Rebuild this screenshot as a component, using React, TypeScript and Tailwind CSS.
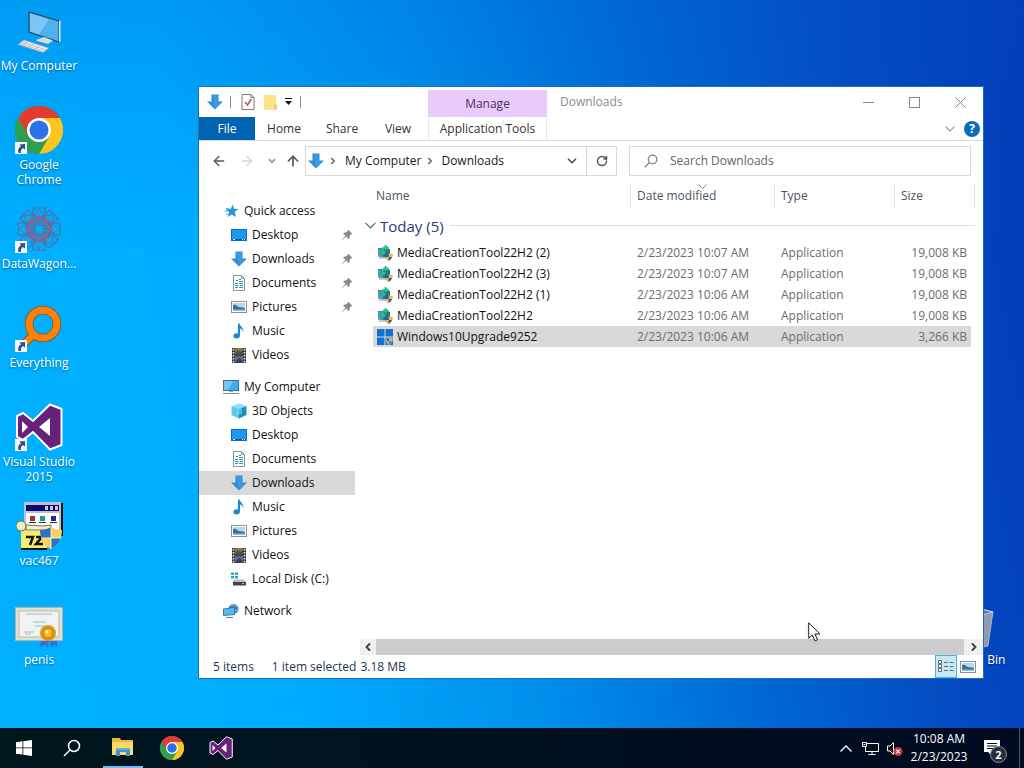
import React, { useState } from 'react';
import { ArrowLeft, ArrowRight, ArrowUp, ChevronDown, ChevronLeft, ChevronRight, RotateCw } from 'lucide-react';

interface IconProps {
  className?: string;
}

/* ---------- icons ---------- */

function DownArrowIcon({ className = 'w-4 h-4' }: IconProps) {
  return (
    <svg viewBox="0 0 16 16" className={className} aria-hidden="true">
      <path d="M4.500.5h7v7H16L8 15.500 0 7.500h4.500z" fill="#2f8bd8" />
      <path d="M5.500 1h5v7.500H14L8 14.500z" fill="#45a0e6" opacity=".7" />
    </svg>
  );
}

function StarIcon() {
  return (
    <svg viewBox="0 0 16 16" className="w-4 h-4" aria-hidden="true">
      <path d="M10 1.500l1 4.200 4.500.3-3.700 2.800L13 14l-4.300-2.600L4.500 14l1.700-4.700L3 6.200l4.500-.3z" fill="#2b95dc" />
      <path d="M3 5.500h3M1.500 8h4M3 11h2.500" stroke="#4eb3ee" />
    </svg>
  );
}

function DesktopIcon() {
  return (
    <svg viewBox="0 0 16 16" className="w-4 h-4" aria-hidden="true">
      <rect x=".5" y="2.500" width="15" height="11" fill="#1b98f5" stroke="#0f6cb8" />
      <path d="M1 12.500h14" stroke="#0c5a9c" />
      <path d="M2 12.500h2M11 12.500h1M13 12.500h1" stroke="#d9efff" />
    </svg>
  );
}

function DocumentIcon() {
  return (
    <svg viewBox="0 0 16 16" className="w-4 h-4" aria-hidden="true">
      <path d="M2.500.5h8l3 3v12h-11z" fill="#fdfefe" stroke="#8794a0" />
      <path d="M10.500.5v3h3" fill="none" stroke="#8794a0" />
      <path d="M5 5.500h2M8 4.500h2M8 6.500h4M4 8.500h3M8 8.500h4M4 10.500h4M9 10.500h3M4 12.500h3M8 12.500h4" stroke="#3c8fb8" />
    </svg>
  );
}

function PictureIcon() {
  return (
    <svg viewBox="0 0 16 16" className="w-4 h-4" aria-hidden="true">
      <rect x=".5" y="2.500" width="15" height="11" fill="#fff" stroke="#8c9299" />
      <rect x="2" y="4" width="12" height="8" fill="#b5d9ee" />
      <path d="M2 6c3-1 4 1.500 6 2s4 .5 6 1v3H2z" fill="#3c6f93" />
      <path d="M2 10.500h12V12H2z" fill="#8dbfd8" />
    </svg>
  );
}

function MusicIcon() {
  return (
    <svg viewBox="0 0 16 16" className="w-4 h-4" aria-hidden="true">
      <path d="M7 .5h1.600c.4 3 4.600 4 3.600 9-.3-2.500-1.500-3.500-3.200-4v7c0 2-1.600 3-3.500 3S2.300 14.400 2.300 13s1.500-2.800 3.400-2.800c.5 0 .9.1 1.300.2z" fill="#1c8bd4" />
    </svg>
  );
}

function VideoIcon() {
  return (
    <svg viewBox="0 0 16 16" className="w-4 h-4" aria-hidden="true">
      <rect x="1" y="1" width="14" height="15" fill="#3b3b3b" />
      <rect x="4" y="1" width="8" height="7" fill="#7d7b4e" />
      <rect x="4" y="9" width="8" height="6" fill="#5c6a9c" />
      <path d="M4 6l3-3 2 2 3-2v5H4z" fill="#4b5236" />
      <path d="M5 14l3-3 3 2v2H5z" fill="#303f68" />
      <path d="M2.500 2v14M13.500 2v14" stroke="#f1f1f1" strokeWidth="1.500" strokeDasharray="1.500 1.500" />
    </svg>
  );
}

function ComputerIcon() {
  return (
    <svg viewBox="0 0 16 16" className="w-4 h-4" aria-hidden="true">
      <rect x=".5" y="1.500" width="15" height="10" fill="#3facf0" stroke="#3c7294" />
      <path d="M1 2h9L5 11H1z" fill="#74c6f8" />
      <path d="M0 14.500h16" stroke="#7c868d" />
      <path d="M6 12.500h4" stroke="#a5adb3" />
    </svg>
  );
}

function CubeIcon() {
  return (
    <svg viewBox="0 0 16 16" className="w-4 h-4" aria-hidden="true">
      <path d="M8 .5l7.500 2.500L8 6 .5 3z" fill="#8fe0f2" />
      <path d="M.5 3L8 6v9.500L.5 12z" fill="#5cc9ea" />
      <path d="M15.500 3L8 6v9.500l7.500-3.500z" fill="#1a8fbf" />
      <path d="M5 6l6-2v7l-6 2z" fill="#6fd3ec" opacity=".6" />
    </svg>
  );
}

function DiskIcon() {
  return (
    <svg viewBox="0 0 16 16" className="w-4 h-4" aria-hidden="true">
      <path d="M0 1.500h3v2.500H0zM4 1.500h3v2.500H4zM0 5h3v2.500H0zM4 5h3v2.500H4z" fill="#1fb1c4" />
      <path d="M3 8.500h10l2 2.500H2z" fill="#b8bfc3" />
      <rect x="2" y="11" width="13" height="3.500" fill="#3d444a" />
      <rect x="11" y="12" width="2" height="1" fill="#6fe08a" />
    </svg>
  );
}

function NetworkIcon() {
  return (
    <svg viewBox="0 0 16 16" className="w-4 h-4" aria-hidden="true">
      <circle cx="10.500" cy="6" r="5" fill="#3e87b8" />
      <path d="M8 3c2-2 5-1 6 1M7 7c2 2 5 2 8-1" stroke="#8ac6e8" fill="none" />
      <path d="M.5 6l11-1.500v7L.5 12.500z" fill="#58b9ef" stroke="#2c7daf" />
      <path d="M3 14.500h7" stroke="#5d7e92" />
    </svg>
  );
}

function PinIcon() {
  return (
    <svg viewBox="0 0 12 12" className="w-3 h-3" aria-hidden="true">
      <path d="M7 .5l4.500 4.500-1.200.2-1.800 1.800c.3 1.300 0 2.300-.8 3L5.200 7.500 1 11.300.7 11 4.500 6.800 2 4.300c.8-.8 1.800-1 3-.8l1.800-1.800z" fill="#848a8f" />
    </svg>
  );
}

function MediaToolIcon() {
  return (
    <svg viewBox="0 0 16 16" className="w-4 h-4" aria-hidden="true">
      <path d="M1 3l12 1v8.500L1 11.500z" fill="#2f6f94" />
      <path d="M1 4l5 .5V11H1z" fill="#5596b8" />
      <path d="M2 13h7" stroke="#7c95a1" />
      <path d="M4 7C4 3.500 5.500 2 8 2V0l4 3-4 3V4.200C6.800 4.200 6.500 5 6.800 6l2.700-.5L7 10z" fill="#1ecf8a" stroke="#128a66" strokeWidth=".5" />
      <path d="M8 9.500l3.700-1.200 3.700 1.200c0 3-1 5-3.700 6.500C9 14.500 8 12.500 8 9.500z" fill="#2f5f90" />
      <path d="M11.700 8.300l3.700 1.200-.3 2.500h-3.400zM11.700 12v4c-1.800-1-2.900-2.300-3.400-4z" fill="#e9c044" />
    </svg>
  );
}

function UpgradeIcon() {
  return (
    <svg viewBox="0 0 16 16" className="w-4 h-4" aria-hidden="true">
      <path d="M0 0h7.500v7.500H0zM8.500 0H16v7.500H8.500zM0 8.500h7.500V16H0zM8.500 8.500H16V16H8.500z" fill="#0d74cf" />
      <path d="M9 9.500l3.200-1 3.200 1c0 3-.8 4.800-3.200 6.300C9.800 14.300 9 12.500 9 9.500z" fill="#2f6fb0" stroke="#dcdcdc" strokeWidth=".6" />
      <path d="M12.200 8.800l2.900.9-.2 2.500h-2.700zM12.200 12.200v3.200c-1.500-1-2.200-1.900-2.700-3.200z" fill="#e9c044" />
    </svg>
  );
}

function MagnifierIcon({ className = 'w-3 h-3' }: IconProps) {
  return (
    <svg viewBox="0 0 18 18" className={className} fill="none" stroke="currentColor" strokeWidth="1.500" aria-hidden="true">
      <circle cx="11" cy="7" r="5.500" />
      <path d="M7 11l-6 6" />
    </svg>
  );
}

function ChromeIcon({ className = 'w-12 h-12' }: IconProps) {
  return (
    <svg viewBox="0 0 48 48" className={className} aria-hidden="true">
      <circle cx="24" cy="24" r="24" fill="#2f9e4f" />
      <path d="M3.200 12A24 24 0 0 1 44.800 12H24L13.600 30z" fill="#e33b2e" />
      <path d="M44.800 12A24 24 0 0 1 24 48L34.400 30 24 12z" fill="#fcc522" />
      <path d="M3.200 12A24 24 0 0 0 24 48L34.400 30H13.600z" fill="#2f9e4f" />
      <circle cx="24" cy="24" r="12" fill="#fff" />
      <circle cx="24" cy="24" r="9.500" fill="#2d71e8" />
    </svg>
  );
}

function VisualStudioIcon({ className = 'w-12 h-12' }: IconProps) {
  return (
    <svg viewBox="0 0 48 48" className={className} aria-hidden="true">
      <path
        d="M35 1.500l11.500 4.500v36L35 46.500 18 29 8 37l-6-3V13l6-3 10 8z"
        fill="#68217a"
        stroke="#fff"
        strokeWidth="2"
      />
      <path d="M35 15L24 24l11 9zM7 18v12l6-6z" fill="#fff" />
    </svg>
  );
}

function MyComputerIcon() {
  return (
    <svg viewBox="0 0 48 48" className="w-12 h-12" aria-hidden="true">
      <g transform="translate(0 2)">
        <path d="M14 3l30 9v21l-30-10z" fill="#4eb0ec" stroke="#26485e" strokeWidth="1.200" />
        <path d="M15 4.500l19 6-10 15-9-3z" fill="#7cc5f4" />
        <path d="M44 12l1.500-.5v21L44 33z" fill="#dfe6ea" />
        <path d="M21 31l8-3 9 3.500-5 3.500-11-3z" fill="#d5dde2" />
        <path d="M9 31l25 8-6 4.500L3 35.500z" fill="#eceff1" stroke="#97a2aa" strokeWidth=".8" />
        <path d="M7 33l24 8M5 34.500l24 8M13 32.500l-6 4M19 34.500l-6 4M25 36.500l-6 4" stroke="#a9b3ba" strokeWidth=".7" />
      </g>
    </svg>
  );
}

// eight overlapping rings of squares around an open centre
function DataWagonIcon() {
  return (
    <svg viewBox="0 0 48 48" className="w-12 h-12" fill="none" aria-hidden="true">
      {[0, 45, 90, 135, 180, 225, 270, 315].map((angle) => (
        <g key={angle} transform={`rotate(${angle} 24 24)`}>
          <path d="M18 3h12v9l-6 8-6-8z" stroke="#4a74a8" strokeWidth="1.200" />
          <path d="M20 9l4-5 4 5-4 9z" stroke="#5f6f9c" />
          <path d="M19 14l5-3 5 3" stroke="#8f5c8c" strokeWidth="1.500" />
          <circle cx="24" cy="14" r="1.600" fill="#c8486c" />
        </g>
      ))}
      <circle cx="24" cy="24" r="6" stroke="#5c78a0" />
    </svg>
  );
}

function EverythingIcon() {
  return (
    <svg viewBox="0 0 48 48" className="w-12 h-12" fill="none" aria-hidden="true">
      <g transform="translate(0 1)">
        <path d="M20 28L6 42" stroke="#7a5433" strokeWidth="8.500" />
        <circle cx="28" cy="19" r="14" stroke="#7a5433" strokeWidth="8.500" />
        <path d="M20 28L6 42" stroke="#ff8208" strokeWidth="6.500" />
        <circle cx="28" cy="19" r="14" stroke="#ff8208" strokeWidth="7" />
      </g>
    </svg>
  );
}

function SetupIcon() {
  return (
    <svg viewBox="0 0 48 48" className="w-12 h-12" aria-hidden="true">
      <path d="M10 1h38v33H12z" fill="#111" />
      <rect x="9" y="0" width="37" height="31" fill="#c3bfcb" />
      <rect x="11" y="3" width="33" height="6" fill="#0a0a78" />
      <path d="M30 4h3v4h-3zM35 4h3v4h-3zM40 4h3v4h-3z" fill="#c8c8c8" />
      <rect x="11" y="11" width="33" height="18" fill="#fff" />
      <rect x="15" y="14" width="5" height="5" fill="#a73324" />
      <rect x="25" y="14" width="5" height="5" fill="#1f9797" />
      <rect x="36" y="14" width="5" height="5" fill="#1b2a9c" />
      <path d="M14 20.500h7M24 20.500h7M35 20.500h7" stroke="#333" />
      <path d="M6 29h26v18H6z" fill="#f4ec6b" />
      <path d="M6 47h26" stroke="#111" strokeWidth="2" />
      <path d="M11 23l17 1 8-1v5H11z" fill="#f1efcd" stroke="#77733a" />
      <circle cx="6" cy="24" r="5" fill="#ecebc9" stroke="#77733a" />
      <path d="M11 35h7l-3 8M21 35h6l-6 7h7" fill="none" stroke="#111" strokeWidth="2.500" />
      <path d="M25 28c4 0 8-1 11-3 3 2 7 3 11 3 0 9-4 15-11 19-7-4-11-10-11-19z" fill="#fbd15b" />
      <path d="M36 25c-3 2-7 3-11 3 0 3 .5 5 1.500 8H36zM36 36v11c5-3 8-6 9.500-11z" fill="#2f74b8" />
      <path d="M36 25v22M26 36h20" stroke="#fff" strokeWidth=".8" />
    </svg>
  );
}

function CertificateIcon() {
  return (
    <svg viewBox="0 0 48 48" className="w-12 h-12" aria-hidden="true">
      <g transform="translate(0 3)">
        <path d="M26 31l-1 12 5-2 3 3 1-12zM34 31l2 13 3-3 4 2-3-12z" fill="#3271d6" />
        <rect x=".5" y="3.500" width="47" height="33" fill="#dfdfd3" stroke="#b4b5a9" />
        <rect x="4" y="7" width="40" height="26" fill="#eef4f6" stroke="#c6b995" />
        <path d="M11 10h26M18 18h13M20 22h9M9 28h10M10 30h6" stroke="#adb8bd" />
        <circle cx="33" cy="29" r="8" fill="#e39a16" />
        <circle cx="33" cy="29" r="5" fill="#f5b92e" stroke="#b87509" />
        <circle cx="32" cy="28" r="1.500" fill="#fff0b8" />
      </g>
    </svg>
  );
}

function RecycleBinIcon() {
  return (
    <svg viewBox="0 0 48 48" className="w-12 h-12" aria-hidden="true">
      <path d="M2 10l22-4 19 5-5 34-14 3-17-4z" fill="#8fa3b8" />
      <path d="M2 10l22-4 19 5-19 6z" fill="#5a7cae" stroke="#dfe7ee" />
      <path d="M24 17l19-6-5 34-14 3z" fill="#8d9dae" stroke="#c7d2dc" strokeWidth=".6" />
    </svg>
  );
}

function ShortcutArrow() {
  return (
    <svg viewBox="0 0 12 12" className="absolute left-0 bottom-0 w-3 h-3" aria-hidden="true">
      <rect width="12" height="12" fill="#f4f6f9" />
      <path d="M3.500 11C2.500 8 3.500 5.500 6 4.500L4.500 2.500 10 2v5.500L8 6C6 7 5.500 9 6 11z" fill="#2c4f97" />
    </svg>
  );
}

function FolderIcon() {
  return (
    <svg viewBox="0 0 24 24" className="w-6 h-6" aria-hidden="true">
      <path d="M1 3h8l1 2h12v15H1z" fill="#eeb83a" />
      <path d="M1 7h21v13H1z" fill="#ffd868" />
      <path d="M5 13h14v8h-4v-4H9v4H5z" fill="#3f93c8" />
      <path d="M5 13h14v2H5z" fill="#5fb0dd" />
    </svg>
  );
}

function WindowsIcon() {
  return (
    <svg viewBox="0 0 16 16" className="w-4 h-4" aria-hidden="true">
      <path d="M0 2.200L6.500 1.300v6.200H0zM7.300 1.200L16 0v7.500H7.300zM0 8.300h6.500v6.300L0 13.700zM7.300 8.300H16V16l-8.700-1.200z" fill="#fff" />
    </svg>
  );
}

/* ---------- data ---------- */

const shortcuts = [
  { label: 'My Computer', icon: <MyComputerIcon />, linked: false },
  { label: 'Google Chrome', icon: <ChromeIcon />, linked: true },
  { label: 'DataWagon...', icon: <DataWagonIcon />, linked: true },
  { label: 'Everything', icon: <EverythingIcon />, linked: true },
  { label: 'Visual Studio 2015', icon: <VisualStudioIcon />, linked: true },
  { label: 'vac467', icon: <SetupIcon />, linked: false },
  { label: 'penis', icon: <CertificateIcon />, linked: false },
];

const navGroups = [
  {
    id: 'quick',
    label: 'Quick access',
    icon: <StarIcon />,
    items: [
      { label: 'Desktop', icon: <DesktopIcon />, pinned: true },
      { label: 'Downloads', icon: <DownArrowIcon />, pinned: true },
      { label: 'Documents', icon: <DocumentIcon />, pinned: true },
      { label: 'Pictures', icon: <PictureIcon />, pinned: true },
      { label: 'Music', icon: <MusicIcon />, pinned: false },
      { label: 'Videos', icon: <VideoIcon />, pinned: false },
    ],
  },
  {
    id: 'computer',
    label: 'My Computer',
    icon: <ComputerIcon />,
    items: [
      { label: '3D Objects', icon: <CubeIcon />, pinned: false },
      { label: 'Desktop', icon: <DesktopIcon />, pinned: false },
      { label: 'Documents', icon: <DocumentIcon />, pinned: false },
      { label: 'Downloads', icon: <DownArrowIcon />, pinned: false },
      { label: 'Music', icon: <MusicIcon />, pinned: false },
      { label: 'Pictures', icon: <PictureIcon />, pinned: false },
      { label: 'Videos', icon: <VideoIcon />, pinned: false },
      { label: 'Local Disk (C:)', icon: <DiskIcon />, pinned: false },
    ],
  },
  { id: 'network', label: 'Network', icon: <NetworkIcon />, items: [] },
];

const files = [
  { name: 'MediaCreationTool22H2 (2)', date: '2/23/2023 10:07 AM', size: '19,008 KB' },
  { name: 'MediaCreationTool22H2 (3)', date: '2/23/2023 10:07 AM', size: '19,008 KB' },
  { name: 'MediaCreationTool22H2 (1)', date: '2/23/2023 10:06 AM', size: '19,008 KB' },
  { name: 'MediaCreationTool22H2', date: '2/23/2023 10:06 AM', size: '19,008 KB' },
  { name: 'Windows10Upgrade9252', date: '2/23/2023 10:06 AM', size: '3,266 KB' },
];

/* ---------- desktop ---------- */

interface DesktopItemProps {
  label: string;
  icon: React.ReactNode;
  linked?: boolean;
}

function DesktopItem({ label, icon, linked }: DesktopItemProps) {
  return (
    <button type="button" className="flex flex-col items-center w-[78px] h-[99px] pt-[7px] text-white">
      <span className="relative w-12 h-12 shrink-0">
        {icon}
        {linked && <ShortcutArrow />}
      </span>
      <span className="mt-[3px] leading-[15px] text-center [text-shadow:0_1px_2px_rgba(0,0,0,0.45)]">{label}</span>
    </button>
  );
}

/* ---------- explorer window ---------- */

function Ribbon() {
  return (
    <header className="flex border-b border-[#dadbdc]">
      <div className="w-[229px]">
        <div className="flex items-center h-[30px] pl-2">
          <DownArrowIcon />
          <span className="w-px h-3 ml-[7px] bg-[#8a8a8a]" />
          <button type="button" aria-label="Properties" className="ml-2.5">
            <svg viewBox="0 0 14 16" className="w-3.5 h-4" fill="none">
              <path d="M1 .5h9l3 3v12H1z" fill="#fff" stroke="#7c7c7c" />
              <path d="M10 .5v3h3" stroke="#7c7c7c" />
              <path d="M4 8l2.500 3L10.500 5" stroke="#b0604a" strokeWidth="1.500" />
            </svg>
          </button>
          <button type="button" aria-label="New folder" className="ml-2">
            <svg viewBox="0 0 14 16" className="w-3.5 h-4">
              <path d="M1 1h12v14H1z" fill="#ffe287" />
              <path d="M11 9l3 2v4.500H1V15h10z" fill="#f2cb5c" />
            </svg>
          </button>
          <button type="button" aria-label="Customize Quick Access Toolbar" className="ml-[7px]">
            <svg viewBox="0 0 9 8" className="w-[9px] h-2">
              <path d="M1 .5h7" stroke="#111" />
              <path d="M1 3h7L4.500 7z" fill="#111" />
            </svg>
          </button>
          <span className="w-px h-3 ml-[7px] bg-[#8a8a8a]" />
        </div>
        <div className="flex h-[23px] text-[#333]">
          <button type="button" className="w-14 bg-[#0063b1] text-white">File</button>
          <button type="button" className="w-[58px]">Home</button>
          <button type="button" className="w-[58px]">Share</button>
          <button type="button" className="w-[54px]">View</button>
        </div>
      </div>
      <div className="w-[119px] pt-[3px] flex flex-col text-[#333]">
        <button type="button" className="h-[27px] bg-[#e8cbfb] text-[#4b2d63]">Manage</button>
        <button type="button" className="h-[23px] border-x border-[#e6e6e6]">Application Tools</button>
      </div>
      <div className="flex-1">
        <div className="flex items-center h-[30px] pl-[13px] text-[#8c8c8c]">
          <h1 className="flex-1">Downloads</h1>
          <button type="button" aria-label="Minimize" className="w-[45px] flex justify-center">
            <svg viewBox="0 0 11 11" className="w-[11px] h-[11px]"><path d="M0 5.500h11" stroke="#888" /></svg>
          </button>
          <button type="button" aria-label="Maximize" className="w-[46px] flex justify-center">
            <svg viewBox="0 0 11 11" className="w-[11px] h-[11px]"><rect x=".5" y=".5" width="10" height="10" fill="none" stroke="#888" /></svg>
          </button>
          <button type="button" aria-label="Close" className="w-[46px] flex justify-center">
            <svg viewBox="0 0 11 11" className="w-[11px] h-[11px]"><path d="M.5.5l10 10M10.500.5l-10 10" stroke="#888" /></svg>
          </button>
        </div>
        <div className="flex items-center justify-end gap-1.5 h-[23px] pr-[3px]">
          <button type="button" aria-label="Expand the Ribbon">
            <ChevronDown className="w-4 h-4 text-[#a3a3a3]" />
          </button>
          <button type="button" aria-label="Help" className="w-4 h-4 rounded-full bg-[#0a6cbd] text-white font-bold leading-4">?</button>
        </div>
      </div>
    </header>
  );
}

function AddressBar() {
  const [query, setQuery] = useState('');

  return (
    <div className="flex items-center h-[39px] px-3 pt-px text-[#1a1a1a]">
      <button type="button" aria-label="Back" className="w-4"><ArrowLeft className="w-4 h-4 text-[#555]" /></button>
      <button type="button" aria-label="Forward" className="w-4 ml-3"><ArrowRight className="w-4 h-4 text-[#d4d4d4]" /></button>
      <button type="button" aria-label="Recent locations" className="w-2.5 ml-3"><ChevronDown className="w-2.5 h-2.5 text-[#8a8a8a]" strokeWidth={4} /></button>
      <button type="button" aria-label="Up" className="w-4 ml-2"><ArrowUp className="w-4 h-4 text-[#555]" strokeWidth={2.5} /></button>
      <div className="flex items-center flex-1 h-[30px] ml-1 pl-0.5 border border-[#d9d9d9]">
        <DownArrowIcon />
        <ChevronRight className="w-2.5 h-2.5 ml-1 text-[#666]" strokeWidth={4} />
        <button type="button" className="ml-[7px]">My Computer</button>
        <ChevronRight className="w-2.5 h-2.5 ml-1 text-[#666]" strokeWidth={4} />
        <button type="button" className="ml-1.5 flex-1 text-left">Downloads</button>
        <button type="button" aria-label="Previous locations" className="w-[29px] flex justify-center">
          <ChevronDown className="w-3.5 h-3.5 text-[#555]" strokeWidth={3} />
        </button>
        <button type="button" aria-label="Refresh" className="flex items-center justify-center w-[30px] h-full border-l border-[#d9d9d9]">
          <RotateCw className="w-3 h-3 text-[#555]" strokeWidth={3} />
        </button>
      </div>
      <label className="flex items-center gap-3 w-[342px] h-[30px] ml-3 px-3.5 border border-[#d9d9d9] text-[#777]">
        <MagnifierIcon className="w-3.5 h-3.5" />
        <input
          type="text"
          aria-label="Search Downloads"
          placeholder="Search Downloads"
          value={query}
          onChange={(e) => setQuery(e.target.value)}
          className="flex-1 min-w-0 outline-none placeholder:text-[#666]"
        />
      </label>
    </div>
  );
}

function NavPane() {
  const [active, setActive] = useState('computer-Downloads');

  return (
    <nav className="flex flex-col gap-2 w-[156px] pt-[19px] text-[#111]">
      {navGroups.map((group) => (
        <ul key={group.id}>
          <li>
            <a href="#" className="flex items-center gap-[5px] h-6 pl-6">{group.icon}{group.label}</a>
          </li>
          {group.items.map((item) => {
            const key = `${group.id}-${item.label}`;
            return (
              <li key={key}>
                <a
                  href="#"
                  onClick={() => setActive(key)}
                  className={`flex items-center gap-[5px] h-6 pl-8 pr-0.5 ${active === key ? 'bg-[#d9d9d9]' : ''}`}
                >
                  {item.icon}
                  <span className="flex-1 whitespace-nowrap">{item.label}</span>
                  {item.pinned && <PinIcon />}
                </a>
              </li>
            );
          })}
        </ul>
      ))}
    </nav>
  );
}

function FileList() {
  const [selected, setSelected] = useState('Windows10Upgrade9252');

  return (
    <div className="flex-1 min-h-0 pl-2.5 pr-2">
      <table className="w-full table-fixed border-separate border-spacing-0 text-left">
        <colgroup>
          <col />
          <col className="w-36" />
          <col className="w-[120px]" />
          <col className="w-20" />
        </colgroup>
        <thead className="text-[#4c5566]">
          <tr className="h-[31px]">
            <th className="p-0 font-normal"><div className="h-6 leading-6 pl-[11px] border-r border-[#e2e2e2]">Name</div></th>
            <th className="relative p-0 font-normal">
              <svg viewBox="0 0 9 5" className="absolute top-1 left-[67px] w-[9px] h-[5px]" fill="none" stroke="#888">
                <path d="M.5.5l4 4 4-4" />
              </svg>
              <div className="h-6 leading-6 pl-1.5 border-r border-[#e2e2e2]">Date modified</div>
            </th>
            <th className="p-0 font-normal"><div className="h-6 leading-6 pl-1.5 border-r border-[#e2e2e2]">Type</div></th>
            <th className="p-0 font-normal"><div className="h-6 leading-6 pl-1.5 border-r border-[#e2e2e2]">Size</div></th>
          </tr>
        </thead>
        <tbody className="text-[#6d6d6d]">
          <tr className="h-[31px]">
            <td colSpan={4} className="p-0 pb-0.5">
              <button type="button" className="flex items-center gap-1 w-full text-[15px] leading-5 text-[#2b3a80]">
                <svg viewBox="0 0 11 7" className="w-[11px] h-[7px]" fill="none" stroke="#666" strokeWidth="1.200">
                  <path d="M.5.8l5 5 5-5" />
                </svg>
                Today (5)
                <span className="flex-1 h-px ml-0.5 bg-[#dedede]" />
              </button>
            </td>
          </tr>
          {files.map((file) => {
            const isSelected = file.name === selected;
            return (
              <tr
                key={file.name}
                onClick={() => setSelected(file.name)}
                className={`h-[21px] ${isSelected ? 'bg-[#d9d9d9]' : ''}`}
              >
                <td className="p-0 border-l-8 border-white">
                  <div className="flex items-center gap-1 pl-1 text-[#111]">
                    {file.name.startsWith('Windows') ? <UpgradeIcon /> : <MediaToolIcon />}
                    {file.name}
                  </div>
                </td>
                <td className="p-0 pl-1.5">{file.date}</td>
                <td className="p-0 pl-1.5">Application</td>
                <td className="p-0 pr-1 text-right border-r-4 border-white">{file.size}</td>
              </tr>
            );
          })}
        </tbody>
      </table>
    </div>
  );
}

function HorizontalScrollbar() {
  return (
    <div className="flex items-center h-4 ml-[5px] bg-[#f0f0f0]">
      <button type="button" aria-label="Scroll left" className="w-4 flex justify-center"><ChevronLeft className="w-3 h-3 text-[#444]" strokeWidth={4} /></button>
      <div className="flex-1 h-full bg-[#cdcdcd]" />
      <button type="button" aria-label="Scroll right" className="w-[19px] flex justify-center"><ChevronRight className="w-3 h-3 text-[#444]" strokeWidth={4} /></button>
    </div>
  );
}

function StatusBar() {
  return (
    <footer className="flex items-center h-[23px] pl-3.5 text-[#26335c]">
      <span>5 items</span>
      <span className="ml-[18px]">1 item selected</span>
      <span className="ml-1 flex-1">3.18 MB</span>
      <button type="button" aria-label="Details view" className="flex items-center justify-center w-[22px] h-[23px] border border-[#4fb0dc] bg-[#c6e9f8]">
        <svg viewBox="0 0 16 13" className="w-4 h-[13px]" fill="none" stroke="#666">
          <path d="M.5.5h3v3h-3zM.5 4.500h3v3h-3zM.5 8.500h3v3h-3z" fill="#fff" />
          <path d="M6 2.500h4M11.500 2.500h4M6 6.500h4M11.500 6.500h4M6 10.500h4M11.500 10.500h4" />
        </svg>
      </button>
      <button type="button" aria-label="Large icons view" className="flex items-center justify-center w-[22px] h-[23px] mr-1">
        <PictureIcon />
      </button>
    </footer>
  );
}

function ExplorerWindow() {
  return (
    <section
      aria-label="Downloads"
      className="absolute top-[86px] left-[198px] right-[40px] bottom-[49px] flex flex-col border border-[#1d6fb4] bg-white"
    >
      <Ribbon />
      <AddressBar />
      <div className="flex flex-1 min-h-0">
        <NavPane />
        <div className="flex flex-col flex-1">
          <FileList />
          <HorizontalScrollbar />
        </div>
      </div>
      <StatusBar />
    </section>
  );
}

/* ---------- taskbar ---------- */

function Taskbar() {
  return (
    <footer className="flex items-stretch h-10 bg-linear-to-r from-[#00171f] to-[#000a20] text-white">
      <button type="button" aria-label="Start" className="flex items-center justify-center w-12"><WindowsIcon /></button>
      <button type="button" aria-label="Search" className="flex items-center justify-center w-12"><MagnifierIcon className="w-[18px] h-[18px]" /></button>
      <div className="flex gap-px ml-[3px]">
        <button type="button" aria-label="File Explorer" className="flex items-center justify-center w-12 px-1">
          <span className="flex items-center justify-center w-10 h-full border-b-2 border-[#76b9ed]"><FolderIcon /></span>
        </button>
        <button type="button" aria-label="Google Chrome" className="flex items-center justify-center w-12"><ChromeIcon className="w-6 h-6" /></button>
        <button type="button" aria-label="Visual Studio 2015" className="flex items-center justify-center w-12"><VisualStudioIcon className="w-6 h-6" /></button>
      </div>
      <div className="flex items-center ml-auto">
        <button type="button" aria-label="Show hidden icons" className="w-6 flex justify-center">
          <svg viewBox="0 0 12 7" className="w-3 h-[7px]" fill="none" stroke="#fff" strokeWidth="1.300"><path d="M.5 6.500L6 1l5.500 5.500" /></svg>
        </button>
        <button type="button" aria-label="Network" className="w-6 flex justify-center">
          <svg viewBox="0 0 17 15" className="w-[17px] h-[15px]" fill="none" stroke="#fff">
            <path d="M5 2.500h11.500v8H3.500V6M10 10.500v3M6.500 13.500h7" />
            <path d="M.5 1.500h4v4h-4zM1.500 3.500h2" />
          </svg>
        </button>
        <button type="button" aria-label="Volume muted" className="w-6 flex justify-center">
          <svg viewBox="0 0 17 15" className="w-[17px] h-[15px]" fill="none" stroke="#fff">
            <path d="M1.500 5h2.500l3.500-3.500v12L4 10H1.500z" />
            <circle cx="12" cy="10.500" r="4.500" fill="#d6303a" stroke="none" />
            <path d="M10.200 8.700l3.600 3.600M13.800 8.700l-3.600 3.600" strokeWidth="1.200" />
          </svg>
        </button>
        <div className="w-[66px] text-center leading-[18px]">
          <time className="block">10:08 AM</time>
          <time className="block">2/23/2023</time>
        </div>
        <button type="button" aria-label="Notifications" className="relative flex items-center w-12 h-full pl-3 border-r border-[#4c5666]">
          <svg viewBox="0 0 16 16" className="w-4 h-4">
            <path d="M0 0h16v12H8v4l-4-4H0z" fill="#fff" />
            <path d="M3 3.500h10M3 6h10M3 8.500h10" stroke="#020c1b" strokeWidth="1.200" />
          </svg>
          <span className="absolute left-[18px] top-[18px] w-[17px] h-[17px] leading-[15px] rounded-full border border-[#8b9198] bg-[#262e3a] text-[11px] font-bold">2</span>
        </button>
        <span className="w-1" />
      </div>
    </footer>
  );
}

export default function App() {
  return (
    <div className="flex flex-col min-h-screen overflow-hidden text-[12px] leading-4 font-['Open_Sans','Noto_Sans',sans-serif]">
      <main className="relative flex-1 bg-[linear-gradient(80deg,#00b0ff_0%,#00aeff_24%,#0092ec_46%,#0069d5_66%,#044ac3_83%,#0239b4_100%)]">
        {/* the light fades towards the top edge */}
        <div className="absolute inset-0 bg-[linear-gradient(180deg,rgba(0,90,205,0.22)_0%,rgba(0,110,225,0)_35%)]" />
        <div className="relative flex flex-col w-[78px]">
          {shortcuts.map((item) => (
            <DesktopItem key={item.label} label={item.label} icon={item.icon} linked={item.linked} />
          ))}
        </div>
        <div className="absolute top-[594px] right-[11px]">
          <DesktopItem label="Recycle Bin" icon={<RecycleBinIcon />} />
        </div>
        <ExplorerWindow />
        <svg viewBox="0 0 13 20" className="absolute top-[622px] left-[808px] w-[13px] h-5 drop-shadow-sm" aria-hidden="true">
          <path d="M.7.8v15.500l3.600-3.500 2.700 6 2.500-1.100-2.600-5.700h5z" fill="#fff" stroke="#222" />
        </svg>
      </main>
      <Taskbar />
    </div>
  );
}
